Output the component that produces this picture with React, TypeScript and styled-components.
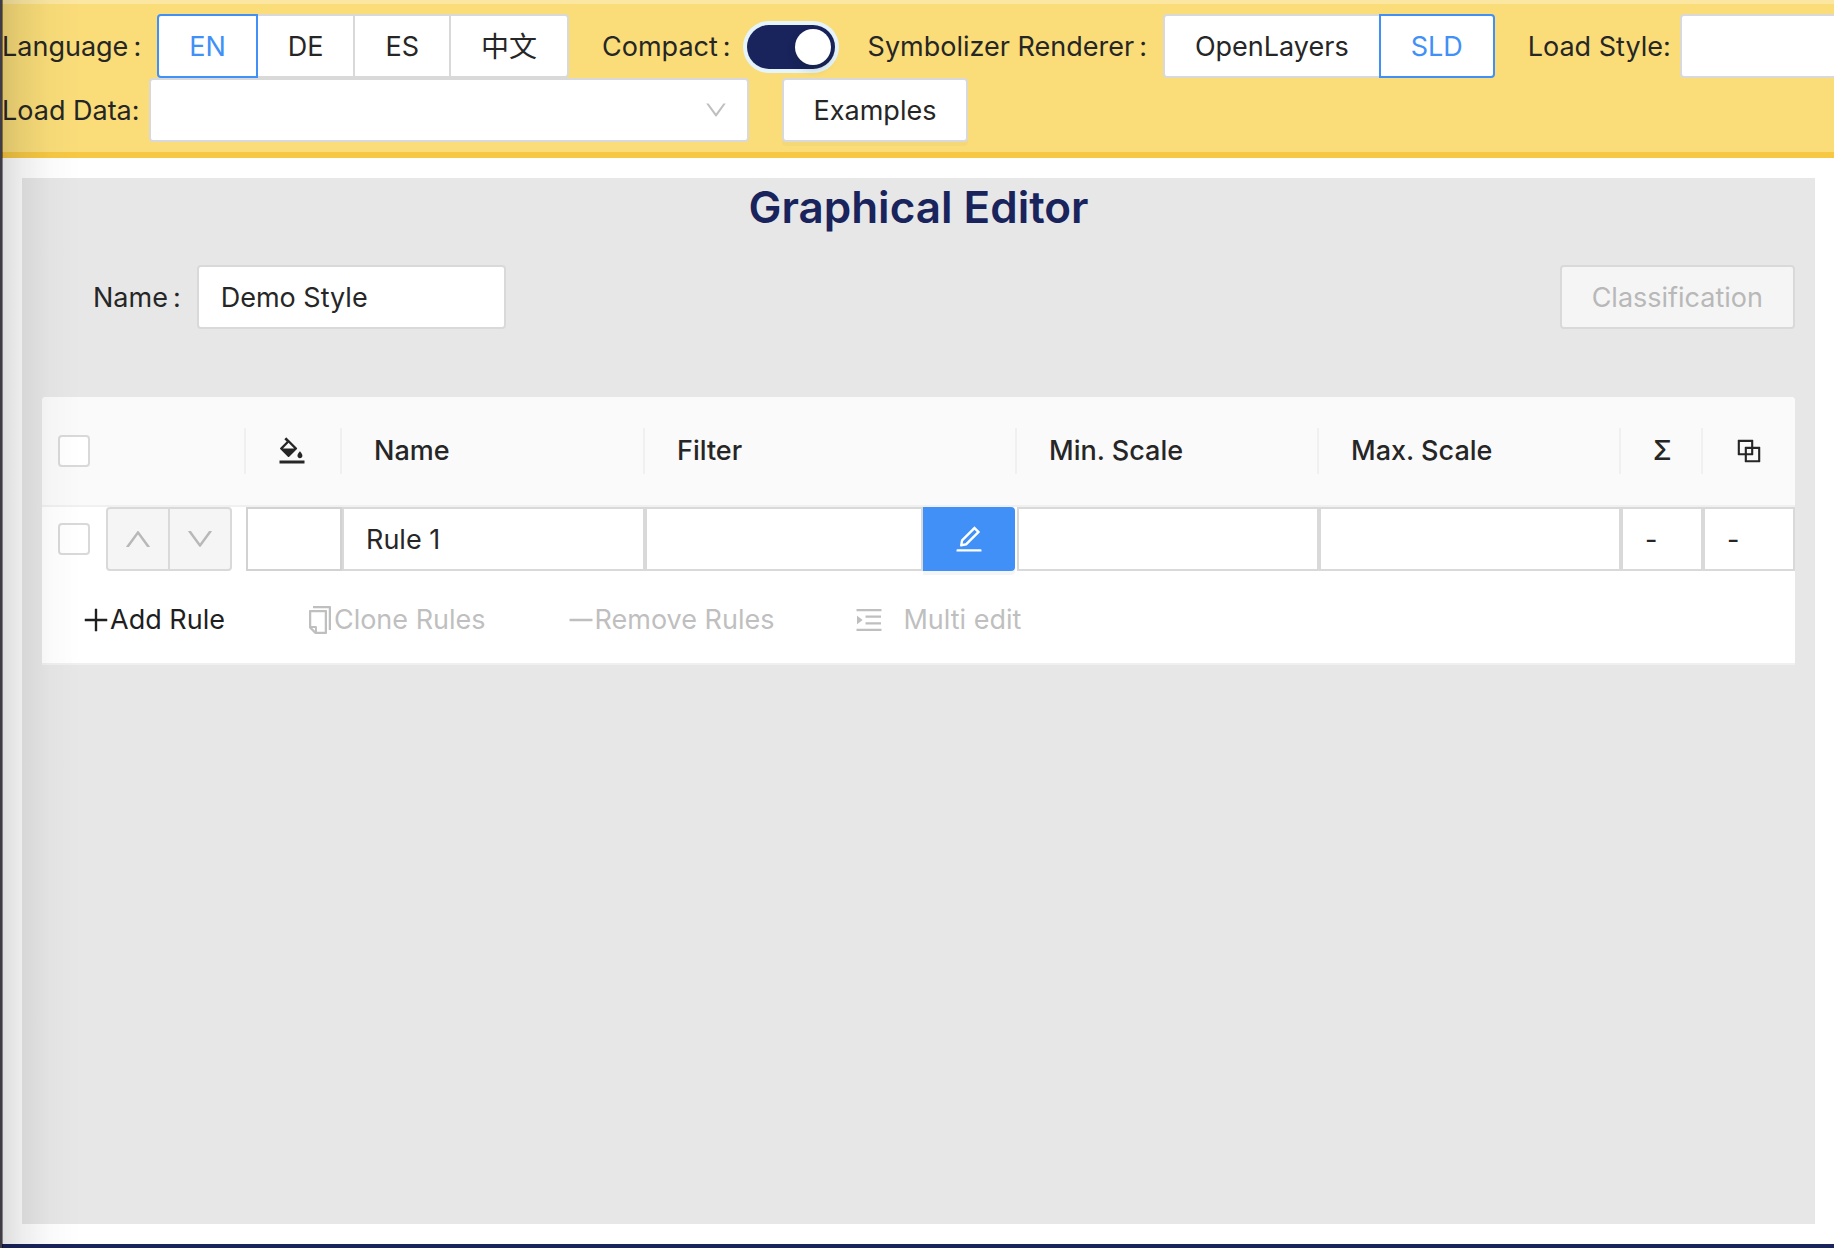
import React, { useState } from 'react';
import styled, { createGlobalStyle, css } from 'styled-components';
import {
  AiOutlineBgColors,
  AiOutlineBlock,
  AiOutlineCopy,
  AiOutlineDown,
  AiOutlineEdit,
  AiOutlineMenuUnfold,
  AiOutlineMinus,
  AiOutlinePlus,
  AiOutlineUp,
} from 'react-icons/ai';

const color = {
  text: '#262626',
  disabled: '#bfbfbf',
  border: '#d9d9d9',
  split: '#f0f0f0',
  primary: '#4090f7',
  navy: '#19235c',
  header: '#fadd79',
  accent: '#f7c843',
  panel: '#e7e7e7',
};

const ICON = 32;

const GlobalStyle = createGlobalStyle`
  *, *::before, *::after { box-sizing: border-box; }
  body {
    margin: 0;
    background: #fff;
    color: ${color.text};
    font-family: Inter, "Noto Sans CJK SC", sans-serif;
    font-size: 27px;
    line-height: 44px;
  }
  button, input, select { font: inherit; color: inherit; margin: 0; }
  svg { display: block; flex: none; }
`;

const Page = styled.div`
  position: relative;
  display: flex;
  flex-direction: column;
  min-height: 100vh;
  border-left: 2px solid #3f3c46;
  overflow: hidden;

  &::after {
    content: '';
    position: absolute;
    inset: 0 auto 0 0;
    width: 80px;
    pointer-events: none;
    background: linear-gradient(
      to right,
      rgba(0, 0, 0, 0.5) 1px,
      rgba(0, 0, 0, 0.13) 1px,
      rgba(0, 0, 0, 0.07) 25%,
      rgba(0, 0, 0, 0.02) 60%,
      rgba(0, 0, 0, 0)
    );
  }
`;

const TopBar = styled.header`
  border-top: 4px solid #fbe7a2;
  border-bottom: 6px solid ${color.accent};
  background: ${color.header};
  padding: 10px 0;
`;

const BarRow = styled.div`
  display: flex;
  align-items: center;
  gap: 33px;
  white-space: nowrap;
`;

const Field = styled.div<{ $gap?: number }>`
  display: flex;
  flex: none;
  align-items: center;
  gap: ${(p) => p.$gap ?? 16}px;
`;

const Label = styled.label<{ $spaced?: boolean }>`
  padding-top: 2px;
  ${(p) =>
    p.$spaced &&
    css`
      &::after {
        content: ':';
        margin-left: 5px;
      }
    `}
`;

const Segments = styled.div`
  display: flex;
`;

const Segment = styled.label<{ $on: boolean }>`
  position: relative;
  z-index: ${(p) => (p.$on ? 1 : 0)};
  display: flex;
  align-items: center;
  height: 64px;
  padding: 2px 30px 0;
  border: 2px solid ${(p) => (p.$on ? color.primary : color.border)};
  background: #fff;
  color: ${(p) => (p.$on ? color.primary : color.text)};
  cursor: pointer;

  &:lang(zh) { font-size: 28px; }
  & + & { margin-left: -2px; }
  &:first-child { border-radius: 4px 0 0 4px; }
  &:last-child { border-radius: 0 4px 4px 0; }

  input {
    position: absolute;
    inset: 0;
    opacity: 0;
  }
`;

const Switch = styled.input`
  appearance: none;
  display: flex;
  justify-content: flex-start;
  width: 88px;
  height: 44px;
  margin-top: 2px;
  padding: 4px;
  border-radius: 22px;
  background: ${color.disabled};
  box-shadow: 0 0 0 4px #e6f4fc;
  cursor: pointer;

  &::before {
    content: '';
    width: 36px;
    height: 36px;
    border-radius: 50%;
    background: #fff;
    box-shadow: 0 4px 8px rgba(0, 35, 11, 0.2);
  }
  &:checked {
    justify-content: flex-end;
    background: ${color.navy};
  }
`;

const SelectBox = styled.div`
  display: grid;
  align-items: center;
  width: 600px;

  select, svg { grid-area: 1 / 1; }
  svg {
    justify-self: end;
    margin-right: 20px;
    color: ${color.disabled};
    pointer-events: none;
  }
`;

const boxed = css`
  height: 64px;
  border: 2px solid ${color.border};
  border-radius: 4px;
  background: #fff;
`;

const Select = styled.select`
  ${boxed}
  appearance: none;
  width: 100%;
  padding: 0 22px;
`;

const Button = styled.button`
  ${boxed}
  padding: 2px 30px 0;
  box-shadow: 0 4px 0 rgba(0, 0, 0, 0.02);
  cursor: pointer;

  &:disabled {
    background: #f5f5f5;
    color: #b8b8b8;
    box-shadow: none;
    cursor: default;
  }
`;

const TextInput = styled.input`
  ${boxed}
  width: 309px;
  padding: 0 22px;
`;

const Main = styled.main`
  flex: 1;
  display: flex;
  padding: 20px 19px 20px 20px;
`;

const Panel = styled.section`
  flex: 1;
  min-width: 0;
  padding: 0 20px;
  background: ${color.panel};
`;

const Title = styled.h2`
  margin: 0;
  padding: 4px 0 33px;
  color: ${color.navy};
  font-size: 44px;
  font-weight: 600;
  line-height: 50px;
  text-align: center;
`;

const StyleRow = styled.div`
  display: flex;
  align-items: center;
  justify-content: space-between;
  padding-left: 51px;
  margin-bottom: 68px;
`;

const TableCard = styled.div`
  border-bottom: 2px solid ${color.split};
  border-radius: 4px 4px 0 0;
  background: #fff;
  overflow: hidden;
`;

const RuleTable = styled.table`
  width: 100%;
  table-layout: fixed;
  border-collapse: separate;
  border-spacing: 0;

  th, td { padding: 0; text-align: left; }
  thead { background: #fafafa; }
`;

const Col = styled.col<{ $width?: number }>`
  width: ${(p) => (p.$width ? `${p.$width}px` : 'auto')};
`;

const HeadCell = styled.th`
  height: 110px;
  border-bottom: 2px solid ${color.split};
  font-weight: 500;
`;

const HeadContent = styled.div<{ $inset?: number; $last?: boolean }>`
  display: flex;
  align-items: center;
  height: 46px;
  padding-left: ${(p) => p.$inset ?? 32}px;
  border-right: ${(p) => (p.$last ? 0 : 2)}px solid ${color.split};
`;

const CheckBox = styled.input`
  appearance: none;
  display: block;
  width: 32px;
  height: 32px;
  border: 2px solid ${color.border};
  border-radius: 4px;
  background: #fff;

  &:checked { background: ${color.primary}; }
`;

const SelectCell = styled.div`
  display: flex;
  align-items: center;
  gap: 16px;
  padding-left: 16px;
`;

const OrderGroup = styled.div`
  display: flex;
`;

const OrderButton = styled.button`
  ${boxed}
  display: flex;
  align-items: center;
  justify-content: center;
  width: 64px;
  padding: 0;
  background: #f5f5f5;
  color: #b8b8b8;

  &:first-child { border-radius: 4px 0 0 4px; }
  & + & { margin-left: -2px; border-radius: 0 4px 4px 0; }
`;

const Swatch = styled.button`
  ${boxed}
  display: block;
  width: 100%;
  border-color: #d2d2d2;
  border-radius: 0;
`;

const CellInput = styled.input`
  ${boxed}
  display: block;
  width: 100%;
  min-width: 0;
  padding: 0 22px;
  border-radius: 0;
`;

const FilterCell = styled.div`
  display: flex;
  padding-right: 2px;
`;

const EditButton = styled.button`
  display: flex;
  flex: none;
  align-items: center;
  justify-content: center;
  width: 92px;
  height: 64px;
  border: 0;
  border-radius: 0 4px 4px 0;
  background: ${color.primary};
  color: #fff;
  box-shadow: 0 4px 0 rgba(0, 0, 0, 0.04);
`;

const Actions = styled.div`
  display: flex;
  align-items: center;
  gap: 81px;
  height: 92px;
  padding: 6px 40px 0;
`;

const Action = styled.button<{ $gap?: number }>`
  display: flex;
  align-items: center;
  gap: ${(p) => p.$gap ?? 0}px;
  padding: 0;
  border: 0;
  background: none;
  color: #1f1f1f;
  white-space: nowrap;

  svg { margin: 0 -2px; }
  &:disabled { color: ${color.disabled}; }
`;

const BottomBar = styled.footer`
  height: 4px;
  background: ${color.navy};
`;

type Option = { text: string; lang?: string };

type SegmentedProps = {
  name: string;
  options: Option[];
  value: string;
  onChange: (value: string) => void;
};

const languages: Option[] = [
  { text: 'EN' },
  { text: 'DE' },
  { text: 'ES' },
  { text: '中文', lang: 'zh' },
];

const renderers: Option[] = [{ text: 'OpenLayers' }, { text: 'SLD' }];

function Segmented({ name, options, value, onChange }: SegmentedProps) {
  return (
    <Segments role="radiogroup" aria-label={name}>
      {options.map(({ text, lang }) => (
        <Segment key={text} lang={lang} $on={text === value}>
          <input
            type="radio"
            name={name}
            checked={text === value}
            onChange={() => onChange(text)}
          />
          {text}
        </Segment>
      ))}
    </Segments>
  );
}

function LoadSelect({ id, label }: { id: string; label: string }) {
  return (
    <Field $gap={9}>
      <Label htmlFor={id}>{label}</Label>
      <SelectBox>
        <Select id={id} />
        <AiOutlineDown size={26} />
      </SelectBox>
    </Field>
  );
}

export default function App() {
  const [language, setLanguage] = useState('EN');
  const [renderer, setRenderer] = useState('SLD');
  const [compact, setCompact] = useState(true);
  const [styleName, setStyleName] = useState('Demo Style');
  const [ruleName, setRuleName] = useState('Rule 1');

  return (
    <>
      <GlobalStyle />
      <Page>
        <TopBar>
          <BarRow>
            <Field>
              <Label as="span" $spaced>Language</Label>
              <Segmented
                name="Language"
                options={languages}
                value={language}
                onChange={setLanguage}
              />
            </Field>
            <Field>
              <Label htmlFor="compact" $spaced>Compact</Label>
              <Switch
                id="compact"
                type="checkbox"
                role="switch"
                checked={compact}
                onChange={(e) => setCompact(e.target.checked)}
              />
            </Field>
            <Field>
              <Label as="span" $spaced>Symbolizer Renderer</Label>
              <Segmented
                name="Symbolizer Renderer"
                options={renderers}
                value={renderer}
                onChange={setRenderer}
              />
            </Field>
            <LoadSelect id="load-style" label="Load Style:" />
          </BarRow>
          <BarRow>
            <LoadSelect id="load-data" label="Load Data:" />
            <Button type="button">Examples</Button>
          </BarRow>
        </TopBar>

        <Main>
          <Panel>
            <Title>Graphical Editor</Title>
            <StyleRow>
              <Field>
                <Label htmlFor="style-name" $spaced>Name</Label>
                <TextInput
                  id="style-name"
                  value={styleName}
                  onChange={(e) => setStyleName(e.target.value)}
                />
              </Field>
              <Button type="button" disabled>Classification</Button>
            </StyleRow>

            <TableCard>
              <RuleTable>
                <colgroup>
                  <Col $width={204} />
                  <Col $width={96} />
                  <Col $width={303} />
                  <Col $width={372} />
                  <Col />
                  <Col />
                  <Col $width={82} />
                  <Col $width={92} />
                </colgroup>
                <thead>
                  <tr>
                    <HeadCell>
                      <HeadContent $inset={16}>
                        <CheckBox type="checkbox" aria-label="Select all rules" />
                      </HeadContent>
                    </HeadCell>
                    <HeadCell>
                      <HeadContent $inset={30}><AiOutlineBgColors size={ICON} /></HeadContent>
                    </HeadCell>
                    <HeadCell><HeadContent>Name</HeadContent></HeadCell>
                    <HeadCell><HeadContent>Filter</HeadContent></HeadCell>
                    <HeadCell><HeadContent>Min. Scale</HeadContent></HeadCell>
                    <HeadCell><HeadContent>Max. Scale</HeadContent></HeadCell>
                    <HeadCell><HeadContent>Σ</HeadContent></HeadCell>
                    <HeadCell>
                      <HeadContent $inset={30} $last><AiOutlineBlock size={ICON} /></HeadContent>
                    </HeadCell>
                  </tr>
                </thead>
                <tbody>
                  <tr>
                    <td>
                      <SelectCell>
                        <CheckBox type="checkbox" aria-label="Select rule" />
                        <OrderGroup>
                          <OrderButton type="button" disabled aria-label="Move up">
                            <AiOutlineUp size={ICON} />
                          </OrderButton>
                          <OrderButton type="button" disabled aria-label="Move down">
                            <AiOutlineDown size={ICON} />
                          </OrderButton>
                        </OrderGroup>
                      </SelectCell>
                    </td>
                    <td><Swatch type="button" aria-label="Symbolizer" /></td>
                    <td>
                      <CellInput
                        aria-label="Rule name"
                        value={ruleName}
                        onChange={(e) => setRuleName(e.target.value)}
                      />
                    </td>
                    <td>
                      <FilterCell>
                        <CellInput aria-label="Filter" />
                        <EditButton type="button" aria-label="Edit filter">
                          <AiOutlineEdit size={ICON} />
                        </EditButton>
                      </FilterCell>
                    </td>
                    <td><CellInput aria-label="Minimum scale" /></td>
                    <td><CellInput aria-label="Maximum scale" /></td>
                    <td><CellInput aria-label="Feature count" value="-" readOnly /></td>
                    <td><CellInput aria-label="Duplicates" value="-" readOnly /></td>
                  </tr>
                </tbody>
              </RuleTable>
              <Actions>
                <Action type="button"><AiOutlinePlus size={ICON} />Add Rule</Action>
                <Action type="button" disabled><AiOutlineCopy size={ICON} />Clone Rules</Action>
                <Action type="button" disabled><AiOutlineMinus size={ICON} />Remove Rules</Action>
                <Action type="button" disabled $gap={20}>
                  <AiOutlineMenuUnfold size={ICON} />Multi edit
                </Action>
              </Actions>
            </TableCard>
          </Panel>
        </Main>
        <BottomBar />
      </Page>
    </>
  );
}
